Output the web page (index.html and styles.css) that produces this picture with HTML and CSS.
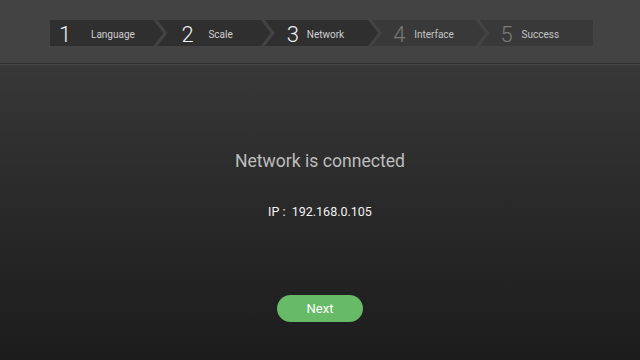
FILE: index.html
```html
<!DOCTYPE html>
<html>
<head>
<meta charset="utf-8">
<link rel="stylesheet" href="styles.css">
</head>
<body>
<div class="page">
  <header class="header">
    <nav class="steps">
      <div class="step step-first done"><span class="num">1</span><span class="label">Language</span></div>
      <div class="step step-2 done"><span class="num">2</span><span class="label">Scale</span></div>
      <div class="step step-3 done"><span class="num">3</span><span class="label">Network</span></div>
      <div class="step step-4 todo"><span class="num">4</span><span class="label">Interface</span></div>
      <div class="step step-last todo"><span class="num">5</span><span class="label">Success</span></div>
    </nav>
  </header>
  <main class="content">
    <h1 class="title">Network is connected</h1>
    <p class="ip">IP :&nbsp; 192.168.0.105</p>
    <button class="next">Next</button>
  </main>
</div>
</body>
</html>
```
FILE: styles.css
```css
* { box-sizing: border-box; margin: 0; padding: 0; }
html, body { width: 640px; height: 360px; overflow: hidden; }
body {
  font-family: Roboto, "Liberation Sans", sans-serif;
  background: #1e1e1e;
}
.page {
  width: 640px;
  height: 360px;
  display: flex;
  flex-direction: column;
  background: linear-gradient(#404040 0px, #353535 90px, #2a2a2a 200px, #1c1c1c 360px);
}
.header {
  height: 64px;
  background: #434343;
  border-bottom: 1px solid #2e2e2e;
  box-shadow: 0 1px 0 #474747;
  padding: 20px 0 0 50px;
}
.steps {
  display: flex;
  width: 543px;
  height: 26px;
}
.step {
  width: 113.4px;
  height: 26px;
  display: flex;
  align-items: center;
  padding-top: 3px;
  padding-left: 24px;
  margin-left: -6px;
  clip-path: polygon(0 0, calc(100% - 10px) 0, 100% 50%, calc(100% - 10px) 100%, 0 100%, 10px 50%);
}
.step-first {
  margin-left: 0;
  padding-left: 9px;
  clip-path: polygon(0 0, calc(100% - 10px) 0, 100% 50%, calc(100% - 10px) 100%, 0 100%);
}
.step-last {
  clip-path: polygon(0 0, 100% 0, 100% 100%, 0 100%, 10px 50%);
}
.done { background: #2f2f2f; }
.todo { background: #393939; }
.num {
  font-size: 22px;
  font-weight: 300;
  line-height: 22px;
  width: 12px;
  margin-right: 15px;
}
.step-first .num { margin-right: 20px; }
.step-3 { padding-left: 22px; }
.step-3 .num { margin-right: 8px; }
.step-4, .step-last { padding-left: 21px; }
.step-4 .num, .step-last .num { margin-right: 9px; }
.done .num { color: #f0f0f0; }
.todo .num { color: #7a7a7a; }
.label {
  font-size: 10px;
  line-height: 22px;
  color: #cfcfcf;
}
.todo .label { color: #c4c4c4; }
.content {
  flex: 1;
  display: flex;
  flex-direction: column;
  align-items: center;
  padding-top: 87px;
}
.title {
  font-size: 17.6px;
  font-weight: 400;
  line-height: 20px;
  color: #bdbdbd;
}
.ip {
  margin-top: 33px;
  font-size: 12.5px;
  line-height: 16px;
  color: #f2f2f2;
}
.next {
  margin-top: 75px;
  width: 86px;
  height: 27px;
  border: none;
  border-radius: 14px;
  background: #68bb66;
  color: #ffffff;
  font-family: Roboto, "Liberation Sans", sans-serif;
  font-size: 13px;
}
```
